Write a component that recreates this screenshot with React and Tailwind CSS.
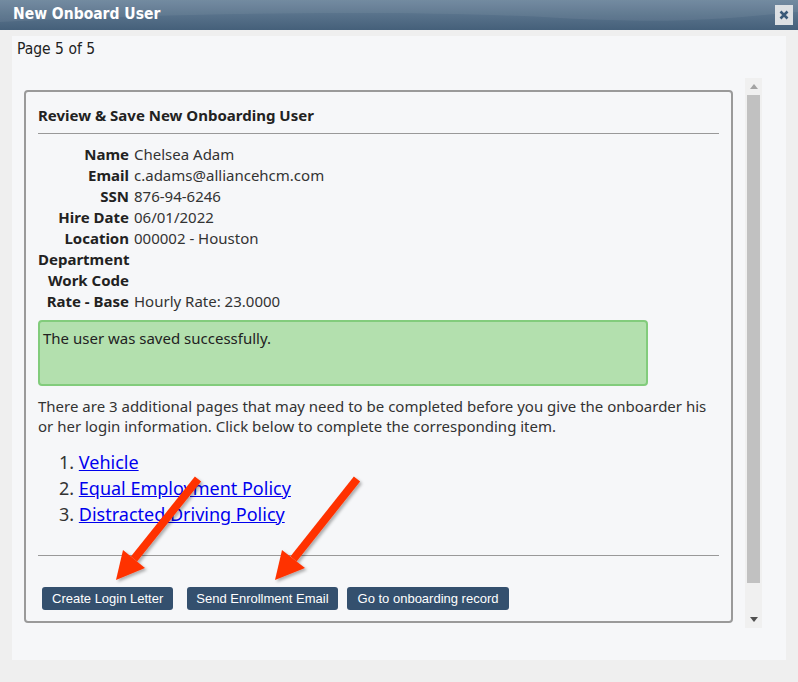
import React from "react";

const fields = [
  ["Name", "Chelsea Adam"],
  ["Email", "c.adams@alliancehcm.com"],
  ["SSN", "876-94-6246"],
  ["Hire Date", "06/01/2022"],
  ["Location", "000002 - Houston"],
  ["Department", ""],
  ["Work Code", ""],
  ["Rate - Base", "Hourly Rate: 23.0000"],
];

const links = ["Vehicle", "Equal Employment Policy", "Distracted Driving Policy"];

function Arrow({ x1, y1, tx, ty, l, r }) {
  return (
    <g>
      <line x1={x1} y1={y1} x2={(l[0] + r[0]) / 2} y2={(l[1] + r[1]) / 2} stroke="#ff3300" strokeWidth="8" />
      <polygon points={`${tx},${ty} ${l[0]},${l[1]} ${r[0]},${r[1]}`} fill="#ff3300" />
    </g>
  );
}

export default function App() {
  return (
    <div className="relative w-[798px] h-[682px] bg-[#efefef] overflow-hidden" style={{ fontFamily: "'Noto Sans', sans-serif" }}>
      {/* title bar */}
      <div className="relative h-[30px] bg-gradient-to-b from-[#6b849b] to-[#45607a] flex items-center justify-between pl-[13px] pr-[5px] overflow-hidden">
        <svg className="absolute inset-0" width="798" height="30">
          <path d="M0 22 C 200 12, 420 10, 560 18 S 760 14, 798 12 L798 0 L0 0 Z" fill="#ffffff" opacity="0.06" />
        </svg>
        <span className="relative text-white font-bold text-[15.5px]" style={{ fontFamily: "'DejaVu Sans Condensed', sans-serif" }}>
          New Onboard User
        </span>
        <div className="relative w-[18px] h-[20px] bg-[#dde0e3] flex items-center justify-center">
          <svg width="10" height="10" viewBox="0 0 10 10">
            <path d="M1.5 1.5 L8.5 8.5 M8.5 1.5 L1.5 8.5" stroke="#3b5a78" strokeWidth="2.6" />
          </svg>
        </div>
      </div>

      {/* inner panel */}
      <div className="ml-[12px] mt-[6px] w-[774px] h-[624px] bg-[#f6f7f9] flex flex-col">
        <div className="pl-[5px] pt-[2px] h-[42px] text-[15.5px] text-[#222]" style={{ fontFamily: "'DejaVu Sans Condensed', sans-serif" }}>
          Page 5 of 5
        </div>
        <div className="flex h-[550px]">
          <div className="w-[733px] pl-[12px] pt-[12px]">
            <div className="w-[709px] h-[533px] border-2 border-[#9a9a9a] rounded-[4px] px-[12px] flex flex-col text-[#222]">
              <div className="h-[42px] pt-[12px] font-bold text-[15px] border-b border-[#999] text-[#222]">
                Review &amp; Save New Onboarding User
              </div>
              <div className="pt-[10px] text-[15px]">
                {fields.map(([k, v]) => (
                  <div key={k} className="flex h-[21px] items-center">
                    <span className="w-[91px] text-right font-bold whitespace-nowrap">{k}</span>
                    <span className="ml-[5px] text-[#333]">{v}</span>
                  </div>
                ))}
              </div>
              <div className="mt-[8px] w-[610px] h-[66px] bg-[#b3e0ae] border-2 border-[#82cc7c] rounded-[4px] px-[3px] pt-[7px] text-[15px] leading-[18px] text-[#222]">
                The user was saved successfully.
              </div>
              <p className="mt-[10px] text-[15px] leading-[20px] text-[#333]">
                There are 3 additional pages that may need to be completed before you give the onboarder his or her login information. Click below to complete the corresponding item.
              </p>
              <ol className="mt-[13px] pl-[21px] text-[18px] leading-[26px] text-[#333]">
                {links.map((l, i) => (
                  <li key={l}>
                    {i + 1}. <a href="#" className="text-[#0000ee] underline">{l}</a>
                  </li>
                ))}
              </ol>
              <div className="mt-[28px] border-t border-[#999]" />
              <div className="flex mt-[31px] pl-[4px]" style={{ fontFamily: "'Liberation Sans', sans-serif" }}>
                <button className="h-[23px] px-[10px] bg-[#34506e] text-white text-[13px] rounded-[3px]">Create Login Letter</button>
                <button className="ml-[14px] h-[23px] px-[9px] bg-[#34506e] text-white text-[13px] rounded-[3px]">Send Enrollment Email</button>
                <button className="ml-[9px] h-[23px] px-[11px] bg-[#34506e] text-white text-[13px] rounded-[3px]">Go to onboarding record</button>
              </div>
            </div>
          </div>
          {/* scrollbar */}
          <div className="w-[17px] h-[550px] bg-[#f0f0f0] flex flex-col items-center">
            <div className="h-[17px] flex items-center justify-center">
              <svg width="8" height="5"><path d="M0 5 L4 0 L8 5 Z" fill="#a3a3a3" /></svg>
            </div>
            <div className="w-[13px] h-[488px] bg-[#c1c1c1]" />
            <div className="flex-1" />
            <div className="h-[17px] flex items-center justify-center">
              <svg width="8" height="5"><path d="M0 0 L8 0 L4 5 Z" fill="#505050" /></svg>
            </div>
          </div>
        </div>
      </div>

      {/* annotation arrows */}
      <svg className="absolute inset-0 pointer-events-none" width="798" height="682">
        <defs>
          <filter id="sh" x="-20%" y="-20%" width="140%" height="140%">
            <feDropShadow dx="2" dy="2" stdDeviation="1.5" floodColor="#000" floodOpacity="0.3" />
          </filter>
        </defs>
        <g filter="url(#sh)">
          <Arrow x1={198} y1={479} tx={116} ty={580} l={[123, 550]} r={[145, 568]} />
          <Arrow x1={357} y1={479} tx={275} ty={580} l={[282, 550]} r={[305, 568]} />
        </g>
      </svg>
    </div>
  );
}
